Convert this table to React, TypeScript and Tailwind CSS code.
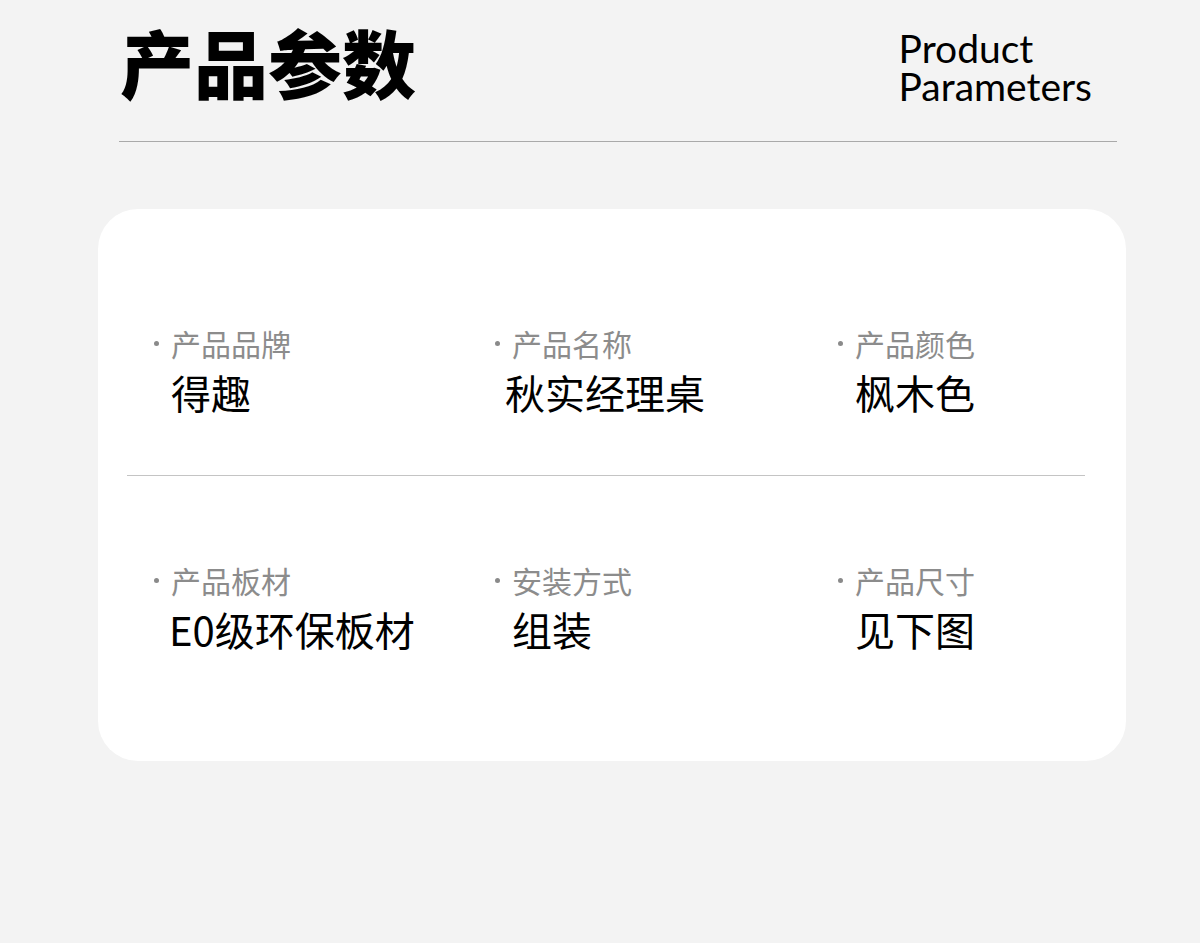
const cjk = { fontFamily: '"Noto Sans CJK SC", "Noto Sans", sans-serif' };

interface Param {
  label: string;
  value: string;
  valueClass?: string;
}

const rows: Param[][] = [
  [
    { label: '产品品牌', value: '得趣' },
    { label: '产品名称', value: '秋实经理桌', valueClass: 'ml-[-7px]' },
    { label: '产品颜色', value: '枫木色' },
  ],
  [
    { label: '产品板材', value: 'E0级环保板材', valueClass: 'ml-[-2px]' },
    { label: '安装方式', value: '组装' },
    { label: '产品尺寸', value: '见下图' },
  ],
];

function ParamItem({ p }: { p: Param }) {
  return (
    <div className="flex flex-col">
      <div className="flex items-center">
        <span className="mr-[12px] h-[5px] w-[5px] rounded-full bg-[#8a8a8a]" />
        <span className="text-[30px] leading-[36px] text-[#8c8c8c]">{p.label}</span>
      </div>
      <div className={`mt-[7px] pl-[17px] text-[40px] font-normal leading-[48px] text-black ${p.valueClass ?? ''}`}>
        {p.value}
      </div>
    </div>
  );
}

export default function App() {
  return (
    <div className="min-h-[943px] w-[1200px] bg-[#f3f3f3]" style={cjk}>
      <div className="ml-[119px] w-[998px] pt-[24px]">
        <div className="flex items-start justify-between">
          <h1 className="pl-[1px] text-[74px] font-black leading-[74px] text-black">产品参数</h1>
          <div
            className="mt-[5px] pr-[25px] text-[39px] leading-[38px] text-black"
            style={{ fontFamily: 'Lato, "Open Sans", sans-serif' }}
          >
            <div>Product</div>
            <div>Parameters</div>
          </div>
        </div>
        <div className="mt-[36px] h-px bg-[#a9a9a9]" />
      </div>

      <div className="ml-[98px] mt-[67px] w-[1028px] rounded-[40px] bg-white">
        <div className="grid grid-cols-[341px_343px_1fr] pl-[56px] pt-[116px] pb-[59px]">
          {rows[0].map((p) => (
            <ParamItem key={p.label} p={p} />
          ))}
        </div>
        <div className="ml-[29px] mr-[41px] h-px bg-[#c4c4c4]" />
        <div className="grid grid-cols-[341px_343px_1fr] pl-[56px] pt-[86px] pb-[108px]">
          {rows[1].map((p) => (
            <ParamItem key={p.label} p={p} />
          ))}
        </div>
      </div>
    </div>
  );
}
